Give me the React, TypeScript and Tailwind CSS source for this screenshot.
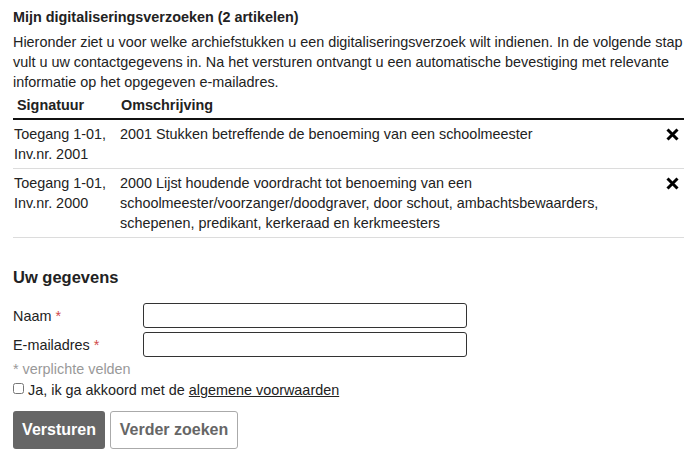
interface RequestItem {
  id: string;
  signature: string[];
  description: string;
}

const items: RequestItem[] = [
  {
    id: '2001',
    signature: ['Toegang 1-01,', 'Inv.nr. 2001'],
    description: '2001 Stukken betreffende de benoeming van een schoolmeester',
  },
  {
    id: '2000',
    signature: ['Toegang 1-01,', 'Inv.nr. 2000'],
    description:
      '2000 Lijst houdende voordracht tot benoeming van een schoolmeester/voorzanger/doodgraver, door schout, ambachtsbewaarders, schepenen, predikant, kerkeraad en kerkmeesters',
  },
];

// Bold cross used for removing an item
const RemoveIcon = () => (
  <svg viewBox="0 0 13 13" className="h-[13px] w-[13px]" aria-hidden="true">
    <path d="M1.5 1.5 L11.5 11.5 M11.5 1.5 L1.5 11.5" stroke="#000" strokeWidth="3" strokeLinecap="butt" />
  </svg>
);

// Table row for one requested item
const ItemRow = ({ item }: { item: RequestItem }) => (
  <div className="grid grid-cols-[107px_1fr_36px] border-b border-[#dcdcdc] pt-[4px] pb-[4px]">
    <div className="pl-[1px]">
      {item.signature.map((line) => (
        <div key={line}>{line}</div>
      ))}
    </div>
    <div className="pr-[24px]">{item.description}</div>
    <div className="flex justify-end pr-[5px] pt-[4px]">
      <button type="button" title="Verwijderen" className="h-[13px] w-[13px]">
        <RemoveIcon />
      </button>
    </div>
  </div>
);

export default function App() {
  return (
    <div
      className="min-h-[458px] w-[700px] bg-white pl-[13px] pr-[8px] pt-[7px] text-[14.4px] leading-[20px] text-[#222]"
      style={{ fontFamily: '"Liberation Sans", Arial, sans-serif' }}
    >
      <h2 className="font-bold">Mijn digitaliseringsverzoeken (2 artikelen)</h2>
      <p className="mt-[5px]">
        Hieronder ziet u voor welke archiefstukken u een digitaliseringsverzoek wilt indienen. In de volgende stap
        vult u uw contactgegevens in. Na het versturen ontvangt u een automatische bevestiging met relevante
        informatie op het opgegeven e-mailadres.
      </p>

      <div className="w-[671px]">
        <div className="grid grid-cols-[107px_1fr_36px] border-b-2 border-[#111] pt-[3px] pb-[3px] font-bold">
          <div className="pl-[4px]">Signatuur</div>
          <div className="pl-[1px]">Omschrijving</div>
          <div />
        </div>
        {items.map((item) => (
          <ItemRow key={item.id} item={item} />
        ))}
      </div>

      <h3 className="mt-[29px] text-[16.5px] leading-[20px] font-bold">Uw gegevens</h3>

      <form className="mt-[16px]" onSubmit={(e) => e.preventDefault()}>
        <div className="flex flex-col gap-[4px]">
          <label className="flex items-center">
            <span className="w-[130px]">
              Naam <span className="text-[#d04a4a]">*</span>
            </span>
            <input
              type="text"
              className="h-[25px] w-[324px] rounded-[3px] border border-[#333] bg-white px-[4px] outline-none"
            />
          </label>
          <label className="flex items-center">
            <span className="w-[130px]">
              E-mailadres <span className="text-[#d04a4a]">*</span>
            </span>
            <input
              type="email"
              className="h-[25px] w-[324px] rounded-[3px] border border-[#333] bg-white px-[4px] outline-none"
            />
          </label>
        </div>

        <p className="mt-[2px] text-[#999]">* verplichte velden</p>

        <label className="mt-[1px] flex items-center">
          <input type="checkbox" className="mr-[4px] h-[11px] w-[11px] -translate-y-[2px]" />
          <span>
            Ja, ik ga akkoord met de{' '}
            <a href="#" className="text-[#222] underline">
              algemene voorwaarden
            </a>
          </span>
        </label>

        <div className="mt-[11px] flex gap-[5px]">
          <button
            type="submit"
            className="h-[38px] w-[92px] rounded-[3px] bg-[#666] text-[16px] font-bold text-white"
          >
            Versturen
          </button>
          <button
            type="button"
            className="h-[38px] w-[128px] rounded-[3px] border border-[#aaa] bg-white text-[16px] font-bold text-[#666]"
          >
            Verder zoeken
          </button>
        </div>
      </form>
    </div>
  );
}
